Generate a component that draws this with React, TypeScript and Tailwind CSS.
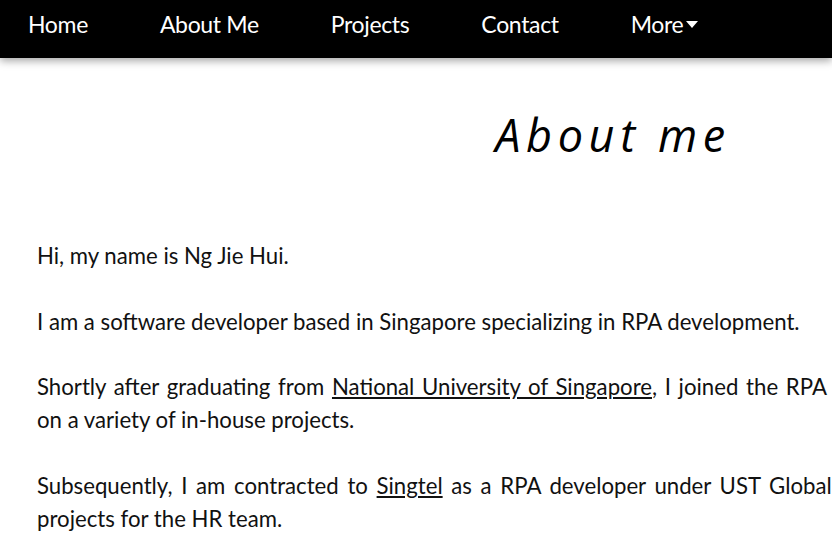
const NAV = ['Home', 'About Me', 'Projects', 'Contact']

export default function App() {
  return (
    <div className="relative h-[551px] w-full overflow-hidden bg-white font-['Lato',sans-serif]">
      {/* Top nav */}
      <nav className="relative z-10 flex h-[58px] items-start gap-[72px] bg-black pl-[28px] pt-[7px] text-[23px] text-white shadow-[0_3px_8px_rgba(0,0,0,0.35)]">
        {NAV.map((item) => (
          <a key={item} href="#" className="tracking-[-0.015em]">
            {item}
          </a>
        ))}
        <a href="#" className="flex items-center tracking-[-0.015em]">
          More
          <svg width="12" height="8" viewBox="0 0 12 8" className="ml-[3px] mt-[2px]">
            <path d="M0 0 L12 0 L6 7 Z" fill="white" />
          </svg>
        </a>
      </nav>

      <main className="w-[1220px] px-[37px]">
        <h1 className="mt-[54px] pl-[6px] text-center font-['Open_Sans',sans-serif] text-[45px] italic leading-none tracking-[0.125em] text-black">
          About me
        </h1>

        <div className="mt-[82px] text-[22.2px] leading-[33px] text-[#111]">
          <p>Hi, my name is Ng Jie Hui.</p>
          <p className="mt-[33px]">I am a software developer based in Singapore specializing in RPA development.</p>
          <p className="mt-[32px]">
            <span className="block whitespace-nowrap [word-spacing:2px]">
              Shortly after graduating from <a href="#" className="underline">National University of Singapore</a>, I joined the RPA team at NCS and worked
            </span>
            <span className="block">on a variety of in-house projects.</span>
          </p>
          <p className="mt-[33px]">
            <span className="block whitespace-nowrap [word-spacing:3px]">
              Subsequently, I am contracted to <a href="#" className="underline">Singtel</a> as a RPA developer under UST Global to develop RPA
            </span>
            <span className="block">projects for the HR team.</span>
          </p>
        </div>
      </main>
    </div>
  )
}
